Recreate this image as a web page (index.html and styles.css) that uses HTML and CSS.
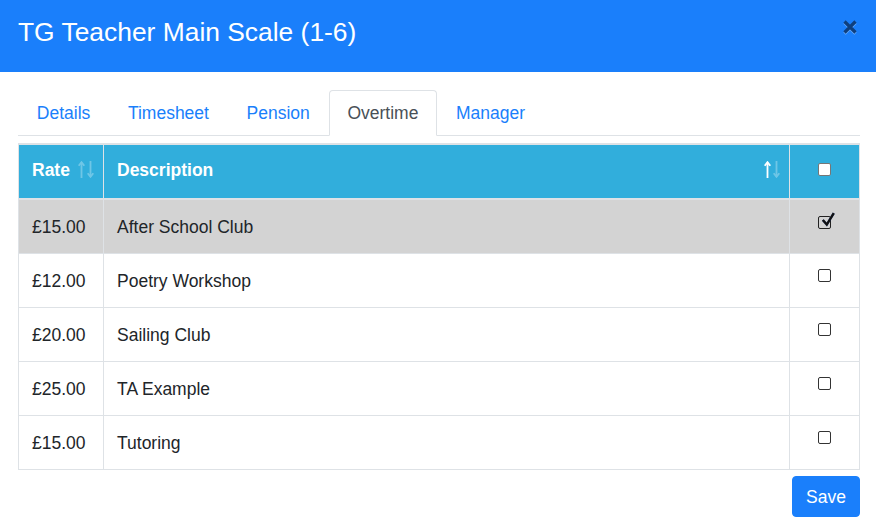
FILE: index.html
```html
<!DOCTYPE html>
<html>
<head>
<meta charset="utf-8">
<link rel="stylesheet" href="styles.css">
</head>
<body>
<div class="modal">
  <div class="modal-header">
    <h5 class="modal-title">TG Teacher Main Scale (1-6)</h5>
    <button class="close" type="button" aria-label="Close">
      <svg width="14" height="14" viewBox="0 0 14 14"><path d="M1.5 1.5 L12.5 12.5 M12.5 1.5 L1.5 12.5" stroke="#0e3f7e" stroke-width="3.2" fill="none"/></svg>
    </button>
  </div>
  <div class="modal-body">
    <ul class="nav-tabs">
      <li><a class="nav-link">Details</a></li>
      <li><a class="nav-link">Timesheet</a></li>
      <li><a class="nav-link">Pension</a></li>
      <li><a class="nav-link active">Overtime</a></li>
      <li><a class="nav-link">Manager</a></li>
    </ul>
    <table class="data-table">
      <thead>
        <tr>
          <th class="col-rate sorting">Rate
            <span class="sort-icons">
              <svg width="16" height="17" viewBox="0 0 16 17"><g fill="none" stroke="#fff" stroke-width="1.8"><g class="dim"><path d="M3.5 1.5 V17"/><path d="M0.7 4.8 L3.5 1.2 L6.3 4.8"/></g><g class="dim"><path d="M12.5 0 V15.5"/><path d="M9.7 12.2 L12.5 15.8 L15.3 12.2"/></g></g></svg>
            </span>
          </th>
          <th class="col-desc sorting">Description
            <span class="sort-icons">
              <svg width="16" height="17" viewBox="0 0 16 17"><g fill="none" stroke="#fff" stroke-width="1.8"><g><path d="M3.5 1.5 V17"/><path d="M0.7 4.8 L3.5 1.2 L6.3 4.8"/></g><g class="dim"><path d="M12.5 0 V15.5"/><path d="M9.7 12.2 L12.5 15.8 L15.3 12.2"/></g></g></svg>
            </span>
          </th>
          <th class="col-check"><span class="cb cb-head"></span></th>
        </tr>
      </thead>
      <tbody>
        <tr class="selected">
          <td>£15.00</td><td>After School Club</td>
          <td class="col-check"><span class="cb cb-checked"><svg class="tick" width="16" height="16" viewBox="0 0 16 16"><path d="M2.8 8 L6.8 12.6 L13.8 1.2" stroke="#111" stroke-width="2.4" fill="none" stroke-linejoin="miter"/></svg></span></td>
        </tr>
        <tr><td>£12.00</td><td>Poetry Workshop</td><td class="col-check"><span class="cb"></span></td></tr>
        <tr><td>£20.00</td><td>Sailing Club</td><td class="col-check"><span class="cb"></span></td></tr>
        <tr><td>£25.00</td><td>TA Example</td><td class="col-check"><span class="cb"></span></td></tr>
        <tr><td>£15.00</td><td>Tutoring</td><td class="col-check"><span class="cb"></span></td></tr>
      </tbody>
    </table>
    <div class="footer">
      <button class="btn-save" type="button">Save</button>
    </div>
  </div>
</div>
</body>
</html>
```
FILE: styles.css
```css
* { box-sizing: border-box; }
html, body { margin: 0; padding: 0; background: #fff; }
body {
  font-family: "Liberation Sans", Arial, sans-serif;
  font-size: 17.5px;
  line-height: 26px;
  color: #212529;
}
.modal { width: 876px; }
.modal-header {
  height: 72px;
  background: #1a7ffb;
  display: flex;
  justify-content: space-between;
  align-items: flex-start;
  padding: 13px 18px 0 18px;
}
.modal-title {
  margin: 0;
  font-size: 26.4px;
  line-height: 39px;
  font-weight: normal;
  color: #fff;
}
.close {
  border: 0;
  background: transparent;
  padding: 0;
  margin: 7px 1px 0 0;
  width: 14px;
  height: 14px;
  display: flex;
  filter: drop-shadow(0 1px 0 rgba(255,255,255,0.35));
}
.modal-body { padding: 18px 16px 0 18px; }
.nav-tabs {
  list-style: none;
  margin: 0;
  padding: 0;
  display: flex;
  border-bottom: 1px solid #dee2e6;
}
.nav-link {
  display: block;
  padding: 9px 17.8px 9px 17.8px;
  border: 1px solid transparent;
  border-top-left-radius: 4px;
  border-top-right-radius: 4px;
  margin-bottom: -1px;
  color: #1a7ffb;
  cursor: pointer;
}
.nav-link.active {
  color: #495057;
  background: #fff;
  border-color: #dee2e6 #dee2e6 #fff;
}
.data-table {
  margin-top: 7px;
  width: 842px;
  border-collapse: collapse;
  border: 1px solid #dee2e6;
  border-top: 2px solid #dee2e6;
}
.data-table th {
  background: #31aedc;
  color: #fff;
  font-weight: bold;
  text-align: left;
  padding: 12px 13px 15px 13px;
  border: 1px solid #dee2e6;
  border-top: 0;
  border-bottom: 2px solid #dee2e6;
  position: relative;
  vertical-align: top;
}
.data-table th.sorting { padding-right: 30px; }
.sort-icons {
  position: absolute;
  right: 9px;
  top: 16px;
  display: block;
  line-height: 0;
}
.sort-icons .dim { opacity: 0.3; }
.col-rate { width: 85px; }
.col-check { width: 70px; text-align: center !important; padding-left: 0 !important; padding-right: 0 !important; }
.data-table td {
  padding: 14px 13px 13px 13px;
  border: 1px solid #dee2e6;
  vertical-align: top;
}
.data-table tr.selected td { background: #d3d3d3; }
.cb {
  display: inline-block;
  width: 13px;
  height: 13px;
  border: 1px solid #333;
  border-radius: 2px;
  background: #fff;
  vertical-align: top;
  margin-top: 1px;
  position: relative;
}
.cb-head {
  margin-top: 6px;
  border-color: #767676;
}
.cb-checked { background: transparent; border-color: #222; margin-top: 2px; }
.tick {
  position: absolute;
  left: 1px;
  top: -5px;
  filter: drop-shadow(0.5px 0.5px 0.6px rgba(40,90,200,0.7));
}
.footer {
  display: flex;
  justify-content: flex-end;
  padding-top: 6px;
}
.btn-save {
  font-family: inherit;
  font-size: 17.5px;
  line-height: 26px;
  color: #fff;
  background: #1a7ffb;
  border: 1px solid #1a7ffb;
  border-radius: 4px;
  padding: 6.5px 13px;
  cursor: pointer;
}
```
